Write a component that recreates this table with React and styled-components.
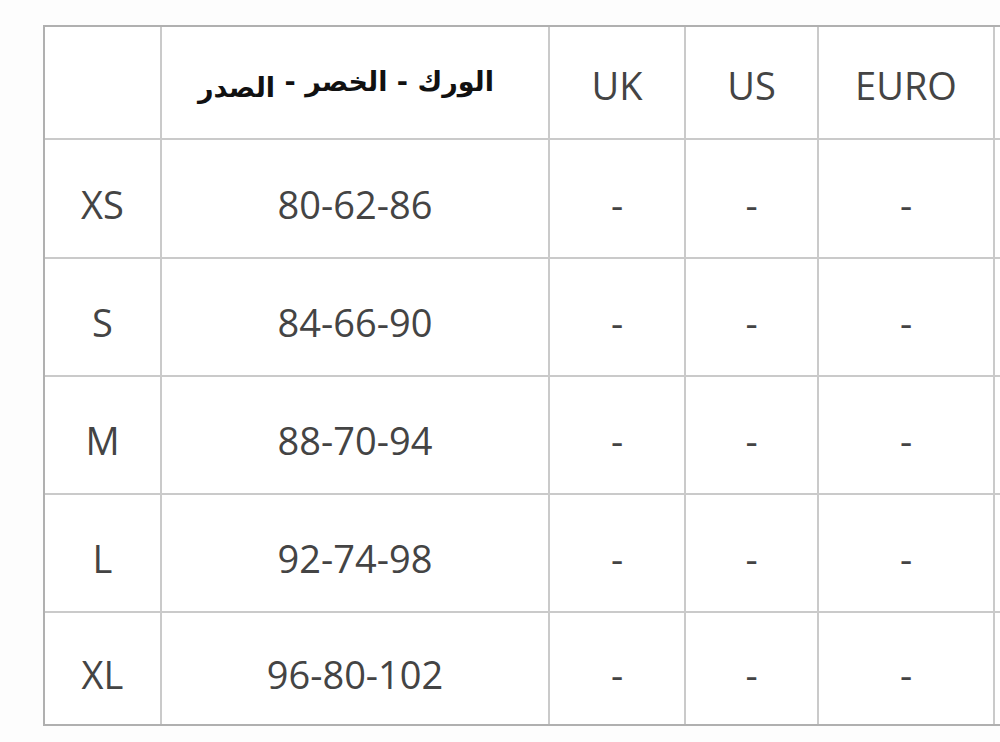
import React from "react";
import styled, { createGlobalStyle } from "styled-components";

const GlobalStyle = createGlobalStyle`
  html, body {
    margin: 0;
    padding: 0;
    background: #fdfdfd;
    overflow: hidden;
  }
`;

const Page = styled.div`
  width: 1000px;
  height: 742px;
  padding: 25px 0 0 43px;
  box-sizing: border-box;
  overflow: hidden;
`;

// the grid gaps draw the inner lines
const Chart = styled.div`
  display: grid;
  grid-template-columns: 115px 386px 134px 131px 174px 140px;
  grid-template-rows: 111px 117px 116px 116px 116px 111px;
  gap: 2px;
  width: max-content;
  background: #cacaca;
  border: 2px solid #b0b0b0;
  border-right: none;
`;

const Cell = styled.div`
  background: #ffffff;
  display: flex;
  align-items: center;
  justify-content: center;
  padding-top: ${(p) => (p.$head ? "4px" : "10px")};
  box-sizing: border-box;
  font-family: "Open Sans", "Noto Sans", sans-serif;
  font-size: 38px;
  color: #444;
`;

const ArabicTitle = styled.span`
  font-family: "DejaVu Sans", sans-serif;
  font-weight: bold;
  font-size: 27px;
  color: #111;
  direction: rtl;
  white-space: nowrap;
  margin-right: 18px;
  margin-top: 0;
`;

const Lower = styled.span`
  display: inline-block;
  vertical-align: -6px;
`;

const sizes = [
  ["XS", "80-62-86"],
  ["S", "84-66-90"],
  ["M", "88-70-94"],
  ["L", "92-74-98"],
  ["XL", "96-80-102"],
];

export default function App() {
  return (
    <>
      <GlobalStyle />
      <Page>
        <Chart>
          <Cell $head />
          <Cell $head>
            <ArabicTitle>
              الورك - الخصر - <Lower>الصدر</Lower>
            </ArabicTitle>
          </Cell>
          <Cell $head>UK</Cell>
          <Cell $head>US</Cell>
          <Cell $head>EURO</Cell>
          <Cell $head />
          {sizes.map(([size, value]) => (
            <React.Fragment key={size}>
              <Cell>{size}</Cell>
              <Cell>{value}</Cell>
              <Cell>-</Cell>
              <Cell>-</Cell>
              <Cell>-</Cell>
              <Cell />
            </React.Fragment>
          ))}
        </Chart>
      </Page>
    </>
  );
}
